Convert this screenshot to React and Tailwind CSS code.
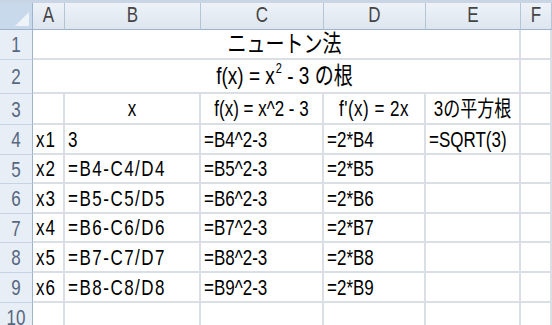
import React from "react";

const cols = ["A", "B", "C", "D", "E", "F"];

const rows = [
  ["x1", "3", "=B4^2-3", "=2*B4", "=SQRT(3)"],
  ["x2", "=B4-C4/D4", "=B5^2-3", "=2*B5", ""],
  ["x3", "=B5-C5/D5", "=B6^2-3", "=2*B6", ""],
  ["x4", "=B6-C6/D6", "=B7^2-3", "=2*B7", ""],
  ["x5", "=B7-C7/D7", "=B8^2-3", "=2*B8", ""],
  ["x6", "=B8-C8/D8", "=B9^2-3", "=2*B9", ""],
];

const font = { fontFamily: '"Liberation Sans", "Noto Sans CJK JP", sans-serif' };

const T = ({ children, className = "" }) => (
  <span className={"inline-block scale-y-[1.25] whitespace-nowrap " + className}>{children}</span>
);

const RowHead = ({ n, h }) => (
  <div
    className={`flex items-center justify-center pt-[3px] bg-[#e8eef6] border-r border-r-[#9fb3cc] border-b border-b-[#c6d3e3] text-[#56677e] text-[17px] ${h}`}
  >
    <T>{n}</T>
  </div>
);

const Cell = ({ children, center, span, h, extra = "" }) => (
  <div
    className={`flex items-center pt-[3px] border-r-2 border-b-2 border-[#dadfe6] text-black text-[17px] px-[3px] ${
      center ? "justify-center" : ""
    } ${span || ""} ${h} ${extra}`}
  >
    <T>{children}</T>
  </div>
);

export default function App() {
  return (
    <div className="w-[552px] h-[325px] overflow-hidden bg-white" style={font}>
      <div className="h-[3px] bg-[#c9d5e4]" />
      <div className="grid grid-cols-[33px_32px_136px_123px_102px_95px_1fr]">
        {/* header row */}
        <div className="h-[27px] bg-[#c9d9ec] border-r border-b border-[#9fb3cc] flex items-end justify-end p-[3px]">
          <svg width="14" height="14" viewBox="0 0 14 14">
            <polygon points="14,0 14,14 0,14" fill="#eef3fa" />
          </svg>
        </div>
        {cols.map((c) => (
          <div
            key={c}
            className="h-[27px] flex items-center justify-center bg-gradient-to-b from-[#eef2f8] to-[#dde5ef] border-r border-[#b5c5d8] border-b border-b-[#9fb3cc] text-[#444] text-[17px]"
          >
            <T>{c}</T>
          </div>
        ))}

        {/* row 1 */}
        <RowHead n="1" h="h-[30px]" />
        <Cell center span="col-span-5" h="h-[30px]" extra="pl-[20px]">
          <span className="text-[19px]">ニュートン法</span>
        </Cell>
        <Cell h="h-[30px]" />

        {/* row 2 */}
        <RowHead n="2" h="h-[34px]" />
        <Cell center span="col-span-5" h="h-[34px]" extra="pl-[20px]">
          <span className="text-[19px]">
            f(x) = x<span className="inline-block text-[11px] relative -top-[9px] ml-[1px]">2</span> - 3 の根
          </span>
        </Cell>
        <Cell h="h-[34px]" />

        {/* row 3 */}
        <RowHead n="3" h="h-[31px]" />
        <Cell h="h-[31px]" />
        <Cell center h="h-[31px]">x</Cell>
        <Cell center h="h-[31px]">f(x) = x^2 - 3</Cell>
        <Cell center h="h-[31px]">
          <span className="tracking-[0.5px]">f'(x) = 2x</span>
        </Cell>
        <Cell center h="h-[31px]">3の平方根</Cell>
        <Cell h="h-[31px]" />

        {rows.map((r, i) => (
          <React.Fragment key={i}>
            <RowHead n={String(i + 4)} h="h-[29.6px]" />
            {r.map((v, j) => (
              <Cell key={j} h="h-[29.6px]">
                <span className={j === 1 ? "tracking-[1.5px]" : j === 0 ? "tracking-[1px]" : ""}>{v}</span>
              </Cell>
            ))}
            <Cell h="h-[29.6px]" />
          </React.Fragment>
        ))}

        <RowHead n="10" h="h-[30px]" />
        {cols.map((c) => (
          <Cell key={c} h="h-[30px]" />
        ))}
      </div>
    </div>
  );
}
